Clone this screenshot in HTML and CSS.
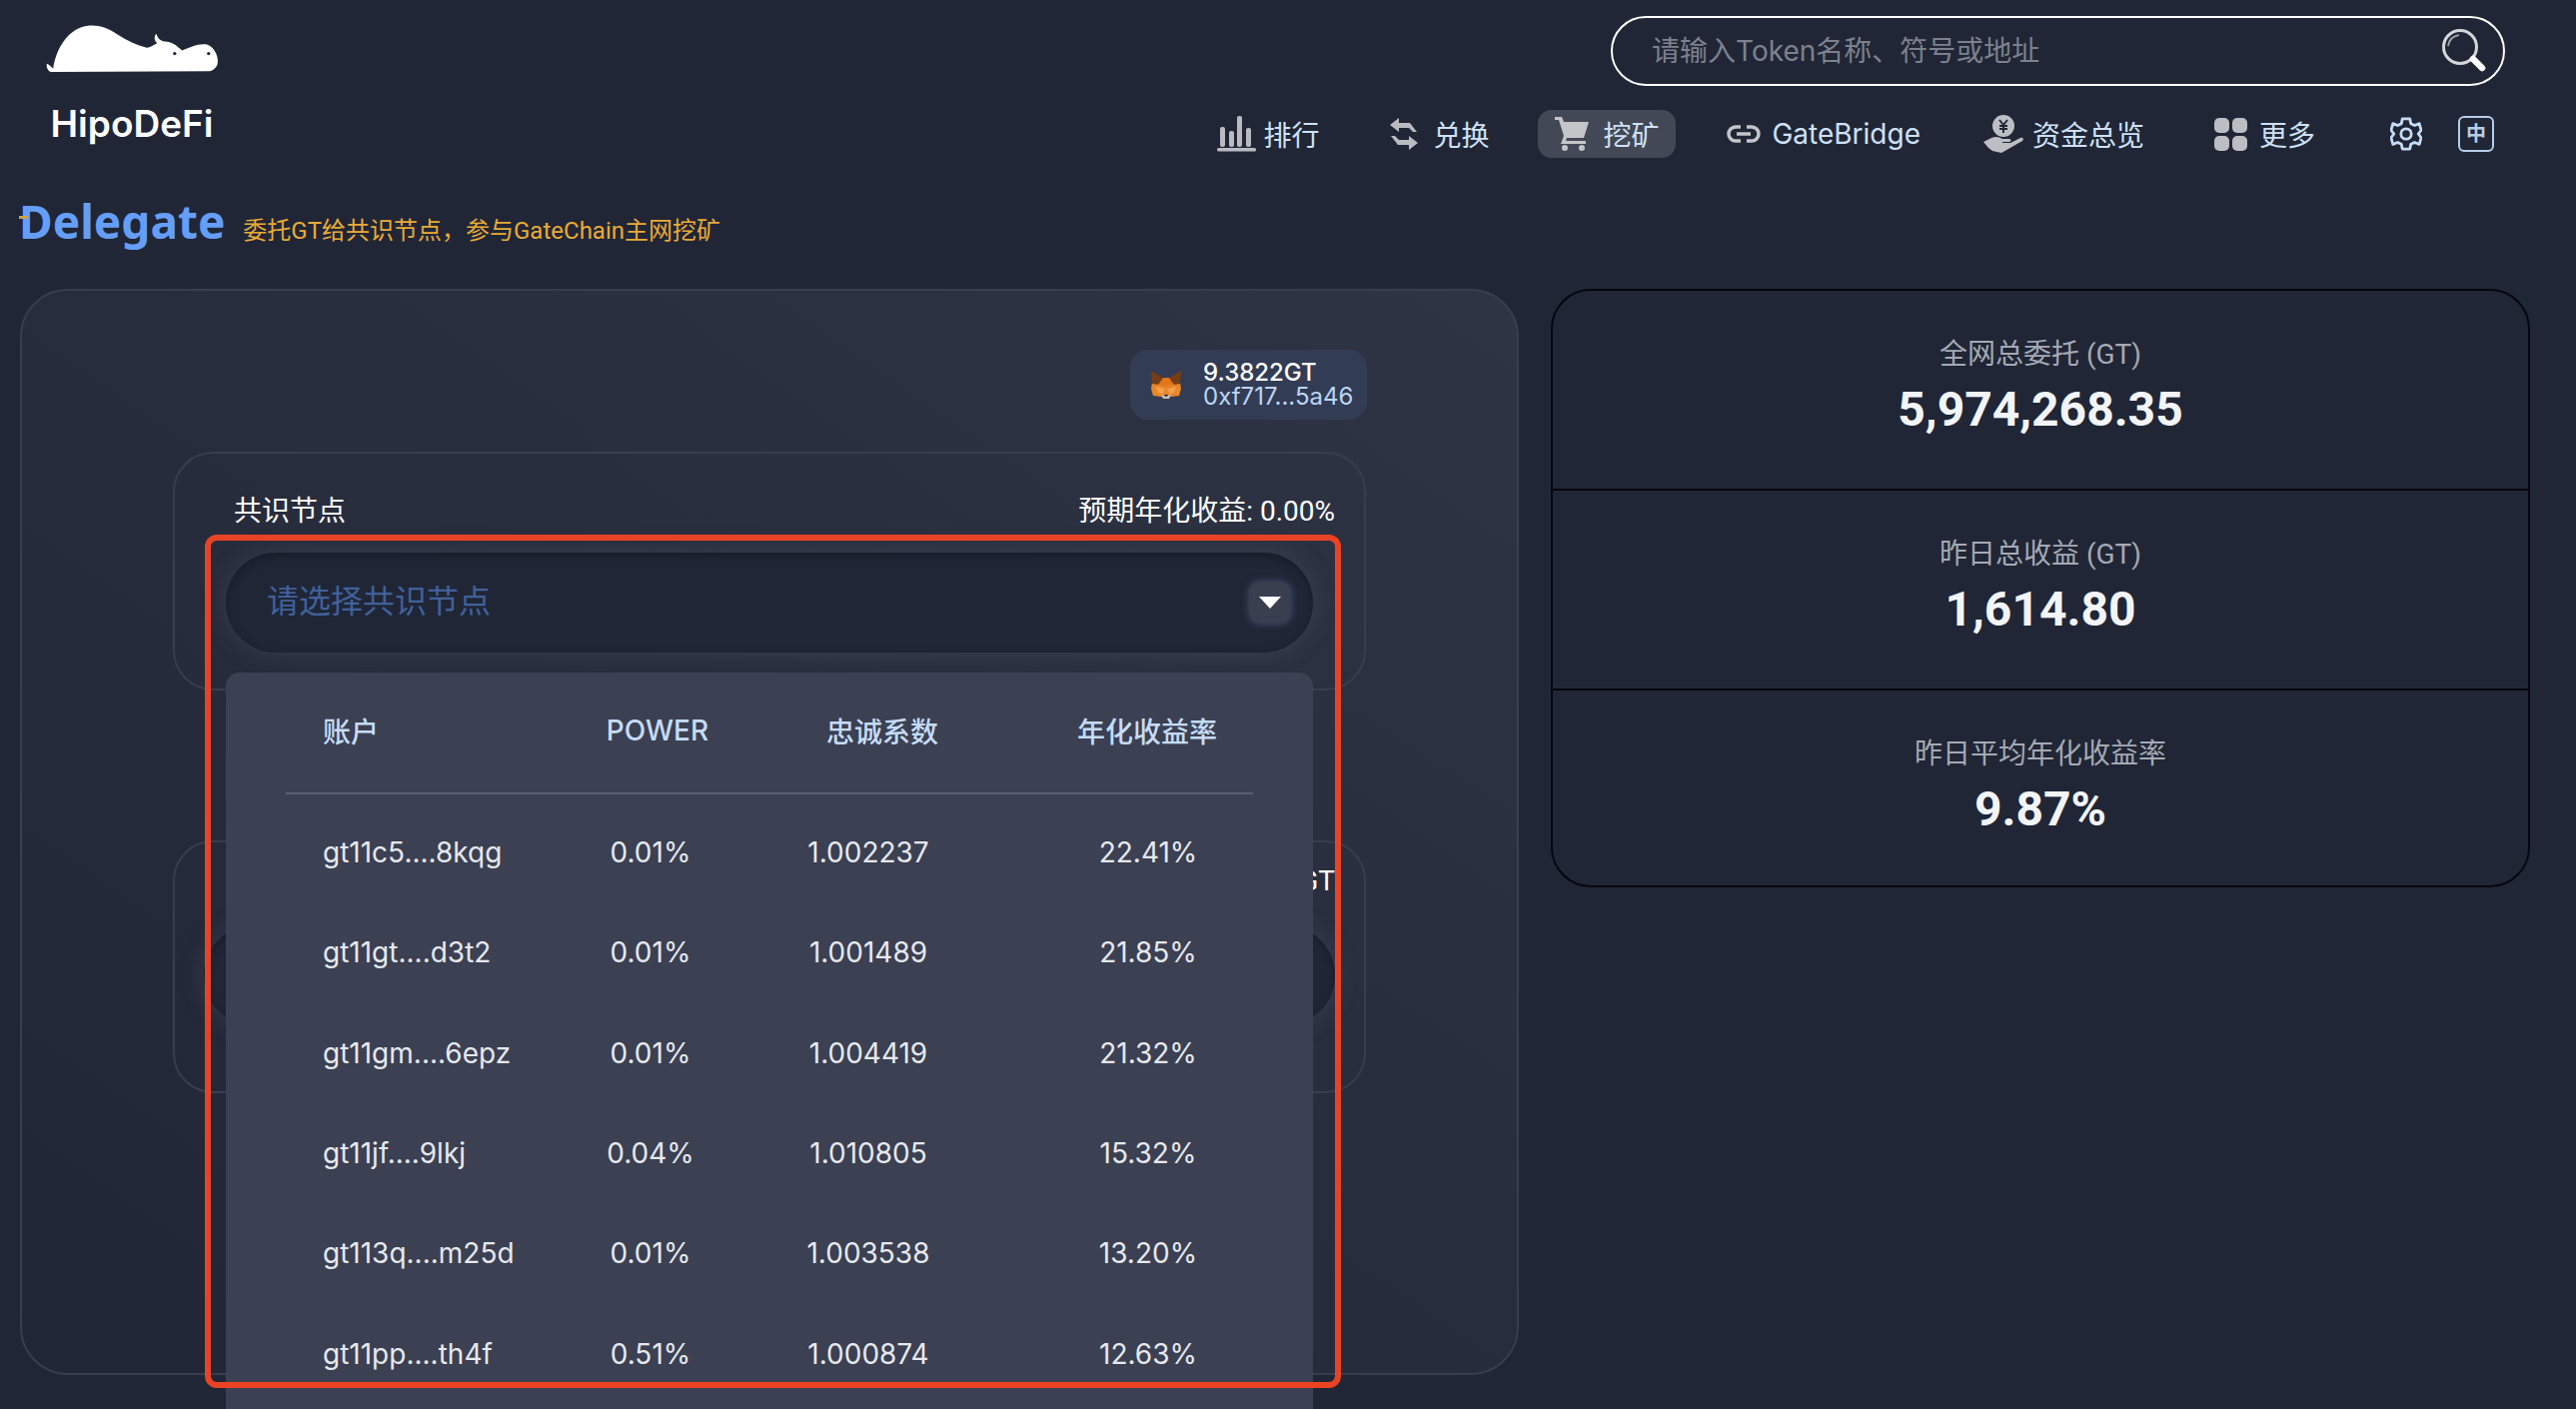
FILE: index.html
```html
<!DOCTYPE html>
<html lang="zh-CN">
<head>
    <meta charset="UTF-8">
    <meta name="viewport" content="width=device-width, initial-scale=1.0">
    <title>HipoDeFi</title>
    <link rel="stylesheet" href="styles.css">
</head>
<body>
    <!-- Top bar -->
    <header class="topbar">
        <a class="brand">
            <svg class="brand-logo" viewBox="40 20 530 170">
                <path fill="#fff" d="M58 187C48 182 44 170 47 162C52 164 60 172 66 176C72 130 100 70 150 52C190 38 225 50 260 72C290 92 320 105 350 113C362 114 372 104 382 100C372 92 372 78 379 71C383 84 392 94 405 94C425 94 440 105 458 122C480 112 510 98 535 104C555 112 566 135 566 155C566 172 552 185 535 185Z"/>
                <circle cx="435" cy="131" r="5" fill="#212737"/>
                <circle cx="538" cy="131" r="5" fill="#212737"/>
            </svg>
            <span class="brand-name">HipoDeFi</span>
        </a>
        <div class="topbar-right">
            <div class="search">
                <input class="search-input" type="text" placeholder="请输入Token名称、符号或地址">
                <svg class="search-icon" viewBox="0 0 46 44" fill="none">
                    <circle cx="19" cy="18" r="16.5" stroke="#d4d6da" stroke-width="3"/>
                    <path d="M7 17C8 10 12 7 18 6" stroke="#9a9da5" stroke-width="2"/>
                    <path d="M32 30L41 39" stroke="#fff" stroke-width="6.5" stroke-linecap="round"/>
                </svg>
            </div>
            <nav class="nav">
                <a class="nav-item">
                    <svg class="nav-icon icon-chart" viewBox="0 0 39 36" fill="#b9bbc0">
                        <rect x="3" y="11" width="5" height="20" rx="2"/>
                        <rect x="12" y="15" width="5" height="16" rx="2"/>
                        <rect x="20" y="0" width="5" height="31" rx="2"/>
                        <rect x="29" y="12" width="5" height="19" rx="2"/>
                        <rect x="0" y="32" width="39" height="3.5" rx="1.5"/>
                    </svg>
                    排行
                </a>
                <a class="nav-item">
                    <svg class="nav-icon icon-swap" viewBox="0 0 30 32" fill="#b9bbc0">
                        <path d="M10 0L1 7L10 14V10H20L24 14H28L21 5H10Z"/>
                        <path d="M20 32L29 25L20 18V22H10L6 18H2L9 27H20Z"/>
                    </svg>
                    兑换
                </a>
                <a class="nav-item nav-item-active">
                    <svg class="nav-icon icon-cart" viewBox="0 0 34 34" fill="#c4c5c9">
                        <path d="M0 0H7L9 5H34L29 21H12L11 24H31V27H6L9 19L4 3H0Z"/>
                        <circle cx="10" cy="31" r="3"/>
                        <circle cx="27" cy="31" r="3"/>
                    </svg>
                    挖矿
                </a>
                <a class="nav-item">
                    <svg class="nav-icon icon-link" viewBox="0 0 34 18" fill="none" stroke="#c4c5c9" stroke-width="3.5">
                        <path d="M14 2H9A7 7 0 0 0 9 16H14"/>
                        <path d="M20 2H25A7 7 0 0 1 25 16H20"/>
                        <path d="M10 9H24"/>
                    </svg>
                    GateBridge
                </a>
                <a class="nav-item nav-item-fund">
                    <svg class="nav-icon icon-fund" viewBox="0 0 40 38">
                        <circle cx="20" cy="11" r="11" fill="#bcbec3"/>
                        <path d="M16 5L20 10L24 5M20 10V18M16 11H24M16 14H24" fill="none" stroke="#212737" stroke-width="2"/>
                        <path fill="#bcbec3" d="M0 27L8 23C12 21 16 22 19 24H26C28 24 28 27 26 27H19V28H27L37 23C39 22 41 24 39 26L25 34L18 38L9 36L5 33Z"/>
                    </svg>
                    资金总览
                </a>
                <a class="nav-item">
                    <svg class="nav-icon icon-more" viewBox="0 0 33 33" fill="#bcbec3">
                        <rect width="15" height="15" rx="5"/>
                        <rect x="18" width="15" height="15" rx="5"/>
                        <rect y="18" width="15" height="15" rx="5"/>
                        <rect x="18" y="18" width="15" height="15" rx="5"/>
                    </svg>
                    更多
                </a>
                <svg class="icon-gear" viewBox="0 0 34 36" fill="none" stroke="#c5dcf7" stroke-width="3" stroke-linejoin="round">
                    <path d="M13 2H21L22 7L26 9L31 7L33 14L30 18L33 22L31 29L26 27L22 29L21 34H13L12 29L8 27L3 29L1 22L4 18L1 14L3 7L8 9L12 7Z"/>
                    <circle cx="17" cy="18" r="5.5"/>
                </svg>
                <span class="lang">中</span>
            </nav>
        </div>
    </header>

    <!-- Page title -->
    <div class="page-title">
        <h1 class="page-name">Delegate</h1>
        <p class="page-desc">委托GT给共识节点，参与GateChain主网挖矿</p>
    </div>

    <main class="content">
        <!-- Delegate form -->
        <section class="panel">
            <div class="wallet">
                <svg class="wallet-fox" viewBox="0 0 30 28">
                    <polygon fill="#e8862a" points="1,12 7,13 15,15 23,13 29,12 30,18 28,25 20,26 15,24 10,26 2,25 0,18"/>
                    <polygon fill="#763d16" points="0,0 12,7 7,14 1,13"/>
                    <polygon fill="#763d16" points="30,0 18,7 23,14 29,13"/>
                    <polygon fill="#e2761b" points="12,7 18,7 23,14 15,16 7,14"/>
                    <polygon fill="#f6a04d" points="5,16 13,18 12,23 7,22"/>
                    <polygon fill="#f6a04d" points="25,16 17,18 18,23 23,22"/>
                    <polygon fill="#c9bcae" points="10,24 20,24 18,28 12,28"/>
                    <polygon fill="#1c1c1c" points="12.5,24 17.5,24 16,25.5 14,25.5"/>
                </svg>
                <div class="wallet-info">
                    <div class="wallet-balance">9.3822GT</div>
                    <div class="wallet-address">0xf717...5a46</div>
                </div>
            </div>

            <div class="field-card">
                <div class="field-head">
                    <span>共识节点</span>
                    <span>预期年化收益: 0.00%</span>
                </div>
                <div class="select">
                    <span class="select-placeholder">请选择共识节点</span>
                    <span class="select-btn"></span>

                    <div class="node-list">
                        <div class="node-head">
                            <span>账户</span>
                            <span class="num">POWER</span>
                            <span class="num">忠诚系数</span>
                            <span class="num last">年化收益率</span>
                        </div>
                        <div class="node-row"><span>gt11c5....8kqg</span><span class="num">0.01%</span><span class="num">1.002237</span><span class="num last">22.41%</span></div>
                        <div class="node-row"><span>gt11gt....d3t2</span><span class="num">0.01%</span><span class="num">1.001489</span><span class="num last">21.85%</span></div>
                        <div class="node-row"><span>gt11gm....6epz</span><span class="num">0.01%</span><span class="num">1.004419</span><span class="num last">21.32%</span></div>
                        <div class="node-row"><span>gt11jf....9lkj</span><span class="num">0.04%</span><span class="num">1.010805</span><span class="num last">15.32%</span></div>
                        <div class="node-row"><span>gt113q....m25d</span><span class="num">0.01%</span><span class="num">1.003538</span><span class="num last">13.20%</span></div>
                        <div class="node-row"><span>gt11pp....th4f</span><span class="num">0.51%</span><span class="num">1.000874</span><span class="num last">12.63%</span></div>
                    </div>
                </div>
            </div>

            <div class="field-card field-card-amount">
                <div class="field-head field-head-amount">
                    <span>GT</span>
                </div>
                <div class="amount-input"></div>
            </div>
        </section>

        <!-- Network totals -->
        <section class="stats">
            <div class="stat">
                <div class="stat-label">全网总委托 (GT)</div>
                <div class="stat-value">5,974,268.35</div>
            </div>
            <div class="stat">
                <div class="stat-label">昨日总收益 (GT)</div>
                <div class="stat-value">1,614.80</div>
            </div>
            <div class="stat">
                <div class="stat-label">昨日平均年化收益率</div>
                <div class="stat-value">9.87%</div>
            </div>
        </section>
    </main>

    <!-- Red annotation frame drawn over the screenshot -->
    <div class="highlight"></div>
</body>
</html>
```

FILE: styles.css
```css
html, body {
    height: 1410px;
    overflow: hidden;
}
body {
    margin: 0;
    position: relative;
    background-color: #202636;
    color: #fff;
    font-family: Inter, "Noto Sans CJK SC", sans-serif;
}

/* Top bar */
.topbar {
    display: flex;
    justify-content: space-between;
    height: 195px;
}
.brand {
    display: flex;
    flex-direction: column;
    align-items: center;
    width: 176px;
    padding: 17px 0 0 44px;
}
.brand-logo {
    width: 176px;
    height: 56px;
}
.brand-name {
    margin-top: 28px;
    font-size: 37px;
    line-height: 46px;
    font-weight: 600;
    white-space: nowrap;
}
.topbar-right {
    display: flex;
    flex-direction: column;
    align-items: flex-end;
    padding: 16px 71px 0 0;
}
.search {
    display: flex;
    align-items: center;
    width: 895px;
    height: 70px;
    box-sizing: border-box;
    border: 2px solid #fff;
    border-radius: 35px;
    padding: 0 16px 0 37px;
}
.search-input {
    flex: 1;
    border: none;
    outline: none;
    background: none;
    color: #fff;
    font-family: inherit;
    font-size: 28px;
}
.search-input::placeholder {
    color: #7d818d;
}
.search-icon {
    width: 46px;
    height: 44px;
}

/* Nav */
.nav {
    display: flex;
    align-items: center;
    gap: 36px;
    height: 48px;
    margin-top: 24px;
    padding-right: 11px;
}
.nav-item {
    display: flex;
    align-items: center;
    height: 48px;
    padding: 0 17px;
    border-radius: 14px;
    color: #cfe0f5;
    font-size: 28px;
    white-space: nowrap;
}
.nav-item-active {
    background-color: #434856;
    margin-left: -4px;
    margin-right: -2px;
}
.nav-item-fund {
    margin-left: -7px;
}
.icon-chart { width: 39px; height: 36px; margin-right: 7px; }
.icon-swap { width: 30px; height: 32px; margin-right: 14px; }
.icon-cart { width: 34px; height: 34px; margin-right: 14px; }
.icon-link { width: 34px; height: 18px; margin-right: 11px; }
.icon-fund { width: 40px; height: 38px; margin-right: 9px; }
.icon-more { width: 33px; height: 33px; margin-right: 12px; }
.icon-gear {
    width: 32px;
    height: 34px;
    margin-left: 22px;
}
.lang {
    width: 36px;
    height: 36px;
    box-sizing: border-box;
    border: 2px solid #b5cdea;
    border-radius: 6px;
    color: #b5cdea;
    font-size: 20px;
    font-weight: 700;
    line-height: 32px;
    text-align: center;
}

/* Page title */
.page-title {
    display: flex;
    align-items: baseline;
    gap: 18px;
    height: 94px;
    padding-left: 19px;
}
.page-name {
    position: relative;
    margin: 0;
    color: #659ef7;
    font-family: "Noto Sans", sans-serif;
    font-size: 46px;
    font-weight: 700;
    line-height: 52px;
}
.page-name::before {
    content: "";
    position: absolute;
    left: 0;
    top: 21px;
    width: 9px;
    height: 3px;
    background-color: #c9a24a;
}
.page-desc {
    margin: 0;
    color: #e9ab37;
    font-family: Roboto, "Noto Sans CJK SC", sans-serif;
    font-size: 24px;
}

/* Layout */
.content {
    display: flex;
    align-items: flex-start;
    gap: 32px;
    padding: 0 46px 0 20px;
}

/* Left panel */
.panel {
    flex: none;
    width: 1500px;
    height: 1087px;
    box-sizing: border-box;
    padding: 59px 151px 0;
    border: 2px solid #383d4f;
    border-radius: 48px;
    background: linear-gradient(35deg, #202636 0%, #292e3e 60%, #2f3444 100%);
}
.wallet {
    display: flex;
    align-items: center;
    gap: 22px;
    width: 237px;
    height: 70px;
    box-sizing: border-box;
    margin: 0 -1px 32px auto;
    padding-left: 21px;
    border-radius: 18px;
    background-color: #323c55;
}
.wallet-fox {
    width: 30px;
    height: 28px;
}
.wallet-info {
    font-size: 24px;
    line-height: 24px;
}
.wallet-balance {
    color: #fff;
    font-weight: 500;
}
.wallet-address {
    color: #bcd5f5;
}
.field-card {
    padding: 38px 51px 36px;
    border: 2px solid #383d4f;
    border-radius: 40px;
}
.field-card-amount {
    height: 253px;
    box-sizing: border-box;
    margin-top: 150px;
    padding: 19px 29px 0;
}
.field-head {
    display: flex;
    justify-content: space-between;
    margin: 0 -22px 21px 8px;
    font-family: Roboto, "Noto Sans CJK SC", sans-serif;
    font-size: 28px;
    line-height: 40px;
    white-space: nowrap;
}
.field-head-amount {
    justify-content: flex-end;
    margin: 0 0 24px;
}

/* Select + dropdown */
.select {
    position: relative;
    display: flex;
    align-items: center;
    justify-content: space-between;
    height: 100px;
    padding: 0 23px 0 41px;
    border-radius: 50px;
    background-color: #202636;
    box-shadow: inset 0 3px 8px #181c29, 0 0 24px rgba(96, 102, 128, 0.3);
}
.select-placeholder {
    padding-bottom: 9px;
    color: #41619a;
    font-size: 32px;
}
.select-btn {
    position: relative;
    width: 40px;
    height: 40px;
    border-radius: 9px;
    background-color: #3a3f50;
    box-shadow: 0 0 8px rgba(128, 146, 190, 0.5);
}
.select-btn::after {
    content: "";
    position: absolute;
    left: 9px;
    top: 14px;
    border-style: solid;
    border-width: 12px 11px 0;
    border-color: #fff transparent transparent;
}
.node-list {
    position: absolute;
    left: 0;
    right: 0;
    top: 120px;
    height: 800px;
    padding: 0 60px;
    border-radius: 14px 14px 0 0;
    background-color: #3b4052;
}
.node-head,
.node-row {
    display: grid;
    align-items: center;
    white-space: nowrap;
}
.node-head {
    grid-template-columns: 272px 200px 250px 246px;
    height: 116px;
    margin-bottom: 8px;
    padding-bottom: 4px;
    border-bottom: 2px solid #5a5f73;
    color: #c5dcf7;
    font-size: 28px;
    font-weight: 500;
}
.node-row {
    grid-template-columns: 265px 200px 236px 267px;
    height: 100.3px;
    color: #e6e8ee;
    font-size: 28px;
}
.node-head span:first-child,
.node-row span:first-child {
    padding-left: 37px;
}
.num {
    text-align: center;
}
.node-head .last {
    padding-left: 34px;
}
.node-row .last {
    padding-left: 57px;
}

/* Second field, mostly behind the dropdown */
.amount-input {
    height: 100px;
    border-radius: 50px;
    background-color: #202636;
    box-shadow: inset 0 3px 8px #181c29, 0 0 24px rgba(96, 102, 128, 0.3);
}

/* Right stats */
.stats {
    flex: none;
    width: 980px;
    box-sizing: border-box;
    border: 2px solid #05070c;
    border-radius: 40px;
    font-family: Roboto, "Noto Sans CJK SC", sans-serif;
}
.stat {
    display: flex;
    flex-direction: column;
    align-items: center;
    height: 198px;
    border-bottom: 2px solid #05070c;
}
.stat:last-child {
    height: 195px;
    border-bottom: none;
}
.stat-label {
    margin-top: 44px;
    color: #a5a9b3;
    font-size: 28px;
    line-height: 40px;
}
.stat-value {
    margin-top: 7px;
    color: #f2f4f8;
    font-size: 48px;
    font-weight: 700;
    line-height: 56px;
}

/* Annotation */
.highlight {
    position: absolute;
    left: 205px;
    top: 535px;
    width: 1137px;
    height: 854px;
    box-sizing: border-box;
    border: 6px solid #e94324;
    border-radius: 12px;
}
```
